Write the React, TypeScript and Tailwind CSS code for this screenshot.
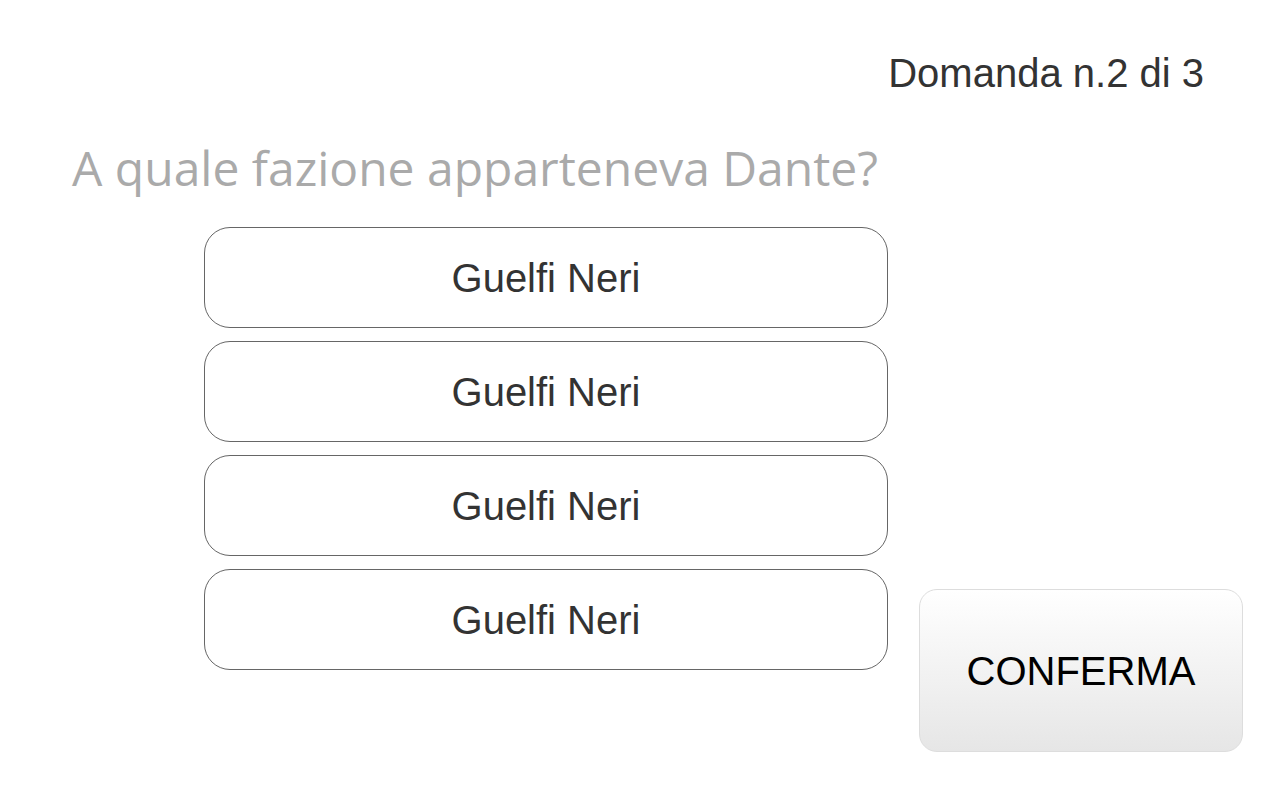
const options = ["Guelfi Neri", "Guelfi Neri", "Guelfi Neri", "Guelfi Neri"];

export default function App() {
  return (
    <div className="w-full h-[800px] bg-white overflow-hidden" style={{ fontFamily: '"Liberation Sans", Arial, sans-serif' }}>
      <div className="flex justify-end pr-[76px] pt-[50px]">
        <span className="text-[40px] leading-[46px] text-[#333333]">Domanda n.2 di 3</span>
      </div>

      <h1
        className="pl-[72px] mt-[41px] text-[48px] leading-[62px] text-[#aaaaaa] font-normal"
        style={{ fontFamily: '"Open Sans", sans-serif' }}
      >
        A quale fazione apparteneva Dante?
      </h1>

      <div className="flex items-start mt-[28px] pl-[204px]">
        <div className="flex flex-col gap-[13px] w-[684px]">
          {options.map((opt, i) => (
            <button
              key={i}
              className="h-[101px] w-full rounded-[26px] border border-[#666666] bg-white text-[40px] text-[#333333] flex items-center justify-center"
            >
              {opt}
            </button>
          ))}
        </div>

        <button className="ml-[31px] mt-[362px] w-[324px] h-[163px] rounded-[18px] border border-[#dddddd] bg-gradient-to-b from-white to-[#e6e6e6] text-[40px] text-black flex items-center justify-center">
          CONFERMA
        </button>
      </div>
    </div>
  );
}
